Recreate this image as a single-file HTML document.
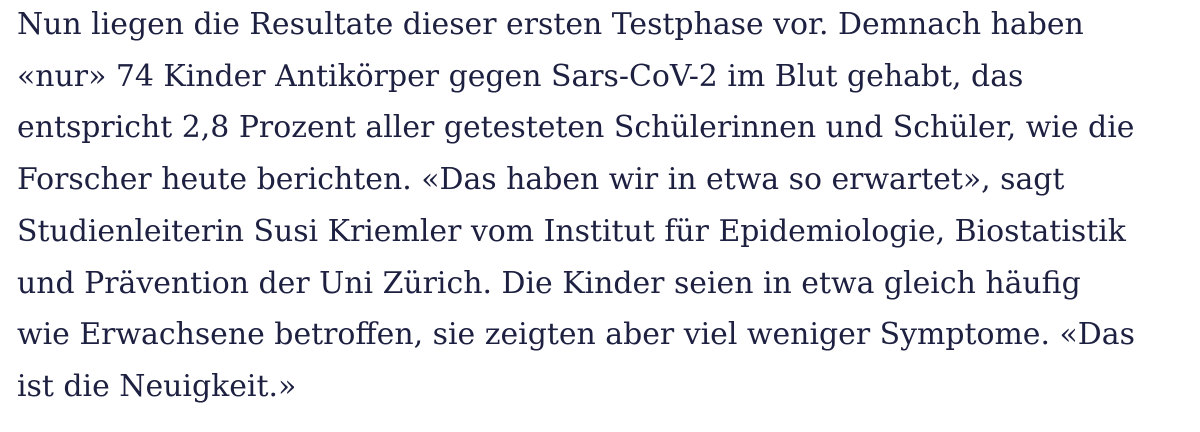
<!DOCTYPE html>
<html><head><meta charset="utf-8"><style>
html,body{margin:0;padding:0;background:#fff;width:1200px;height:432px;overflow:hidden}
.t{position:absolute;left:17px;top:-1px;font-family:"DejaVu Serif","Liberation Serif",serif;font-size:29.9px;line-height:51.7px;color:#1d2040}
.t div{white-space:nowrap}
</style></head><body>
<div class="t">
<div>Nun liegen die Resultate dieser ersten Testphase vor. Demnach haben</div>
<div>«nur» 74 Kinder Antikörper gegen Sars-CoV-2 im Blut gehabt, das</div>
<div>entspricht 2,8 Prozent aller getesteten Schülerinnen und Schüler, wie die</div>
<div>Forscher heute berichten. «Das haben wir in etwa so erwartet», sagt</div>
<div>Studienleiterin Susi Kriemler vom Institut für Epidemiologie, Biostatistik</div>
<div>und Prävention der Uni Zürich. Die Kinder seien in etwa gleich häufig</div>
<div>wie Erwachsene betroffen, sie zeigten aber viel weniger Symptome. «Das</div>
<div>ist die Neuigkeit.»</div>
</div>
</body></html>
